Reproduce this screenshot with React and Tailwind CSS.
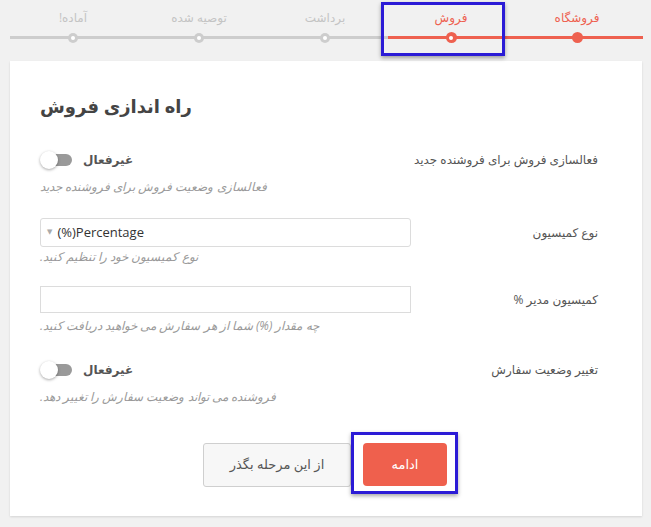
const steps = [
  { label: 'آماده!', state: 'todo' },
  { label: 'توصیه شده', state: 'todo' },
  { label: 'برداشت', state: 'todo' },
  { label: 'فروش', state: 'current' },
  { label: 'فروشگاه', state: 'done' },
];

function Step({ label, state }) {
  const red = state !== 'todo';
  return (
    <div className="flex w-[126px] flex-col items-center">
      <div dir="rtl" className={`h-[36px] pt-[9px] text-[12px] leading-[18px] ${red ? 'text-[#ee6150]' : 'text-[#c4c4c4]'}`}>
        {label}
      </div>
      <div className={`flex h-[3px] w-full items-center justify-center ${red ? 'bg-[#ee6150]' : 'bg-[#cdcdcd]'}`}>
        {state === 'done' && <div className="h-[11px] w-[11px] shrink-0 rounded-full bg-[#ee6150]" />}
        {state === 'current' && (
          <div className="flex h-[11px] w-[11px] shrink-0 items-center justify-center rounded-full bg-[#ee6150]">
            <div className="h-[4px] w-[4px] rounded-full bg-white" />
          </div>
        )}
        {state === 'todo' && (
          <div className="flex h-[10px] w-[10px] shrink-0 items-center justify-center rounded-full bg-[#cdcdcd]">
            <div className="h-[4px] w-[4px] rounded-full bg-white" />
          </div>
        )}
      </div>
    </div>
  );
}

function Toggle() {
  return (
    <div className="flex items-center gap-[9px]">
      <div className="relative h-[20px] w-[34px]">
        <div className="absolute left-[6px] top-[4px] h-[12px] w-[26px] rounded-full bg-[#9a9a9a]" />
        <div className="absolute left-0 top-[1px] h-[18px] w-[18px] rounded-full bg-white shadow-[0_1px_3px_rgba(0,0,0,0.35)]" />
      </div>
      <span dir="rtl" className="text-[12px] font-bold text-[#555]">غیرفعال</span>
    </div>
  );
}

function Row({ label, help, children, h, hm }) {
  return (
    <div className="flex">
      <div className="w-[371px]">
        <div className={`flex items-center ${h}`}>{children}</div>
        <div dir="rtl" className={`${hm} text-left text-[12px] italic leading-[18px] text-[#9a9a9a]`}>{help}</div>
      </div>
      <div dir="rtl" className={`flex flex-1 items-center whitespace-nowrap text-[12px] text-[#555] ${h}`}>{label}</div>
    </div>
  );
}

export default function App() {
  return (
    <div className="relative h-[527px] w-[651px] overflow-hidden bg-[#f1f1f1] font-['Open_Sans','DejaVu_Sans',sans-serif]">
      <div className="flex pl-[10px]">
        {steps.map((s) => (
          <Step key={s.label} {...s} />
        ))}
        <div className="mt-[36px] h-[3px] w-[3px] bg-[#ee6150]" />
      </div>

      <div className="ml-[10px] mt-[22px] h-[455px] w-[632px] bg-white pl-[30px] pr-[44px] pt-[28px] shadow-[0_1px_2px_rgba(0,0,0,0.12)]">
        <h1 dir="rtl" className="w-fit text-[18px] font-bold leading-[34px] text-[#444]">راه اندازی فروش</h1>

        <div className="mt-[24px] flex flex-col">
          <Row label="فعالسازی فروش برای فروشنده جدید" help="فعالسازی وضعیت فروش برای فروشنده جدید" h="h-[26px]" hm="mt-[5px]">
            <Toggle />
          </Row>
          <div className="h-[22px]" />
          <Row label="نوع کمیسیون" help="نوع کمیسیون خود را تنظیم کنید." h="h-[29px]" hm="mt-[1px]">
            <div className="flex h-[29px] w-full items-center gap-[5px] rounded-[3px] border border-[#dcdcdc] px-[6px]">
              <span className="text-[7px] text-[#aaa]">▼</span>
              <span className="text-[13px] text-[#333]">(%)Percentage</span>
            </div>
          </Row>
          <div className="h-[20px]" />
          <Row label="کمیسیون مدیر %" help="چه مقدار (%) شما از هر سفارش می خواهید دریافت کنید." h="h-[27px]" hm="mt-[4px]">
            <div className="h-[27px] w-full border border-[#dcdcdc]" />
          </Row>
          <div className="h-[22px]" />
          <Row label="تغییر وضعیت سفارش" help="فروشنده می تواند وضعیت سفارش را تغییر دهد." h="h-[26px]" hm="mt-[5px]">
            <Toggle />
          </Row>
        </div>

        <div className="mt-[37px] flex justify-center gap-[12px] pl-[12px]">
          <button dir="rtl" className="h-[44px] w-[148px] rounded-[3px] border border-[#cfcfcf] bg-[#f7f7f7] text-[13px] text-[#555]">
            از این مرحله بگذر
          </button>
          <button dir="rtl" className="h-[43px] w-[84px] rounded-[4px] bg-[#ef604d] text-[13px] text-white">
            ادامه
          </button>
        </div>
      </div>

      <div className="absolute left-[381px] top-[2px] h-[54px] w-[124px] border-[3px] border-[#2b1bd6] shadow-[0_2px_4px_rgba(0,0,0,0.35)]" />
      <div className="absolute left-[351px] top-[432px] h-[62px] w-[107px] border-[3px] border-[#2b1bd6] shadow-[0_2px_4px_rgba(0,0,0,0.35)]" />
    </div>
  );
}
